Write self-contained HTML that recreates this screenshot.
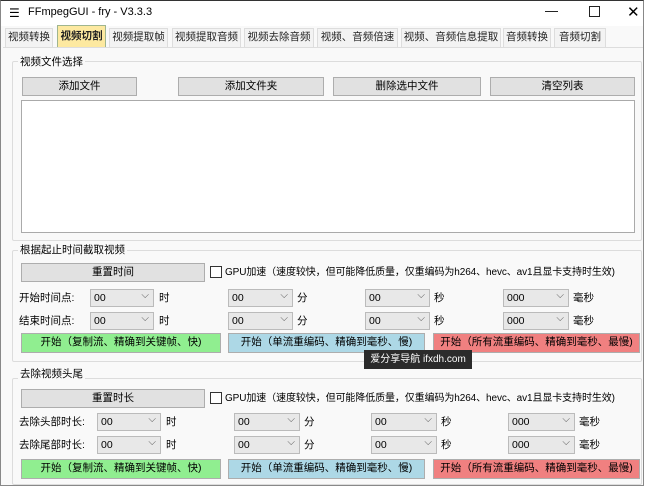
<!DOCTYPE html>
<html><head><meta charset="utf-8"><style>
*{box-sizing:border-box;margin:0;padding:0}
body{width:648px;height:492px;background:#fff;font-family:"Liberation Sans","Noto Sans CJK SC",sans-serif;font-size:11px;color:#000;position:relative;overflow:hidden}
.a{position:absolute;white-space:nowrap}
.win{position:absolute;left:0;top:0;width:644px;height:486px;border:1px solid #888;border-top:1px solid #333;background:#f9f9f9}
.title{position:absolute;left:1px;top:1px;width:642px;height:25px;background:#fff}
.tab{position:absolute;top:28px;height:19px;border:1px solid #ddd;border-bottom:none;background:#f3f3f3;font-size:10.5px;line-height:17px;text-align:center;color:#222}
.sel{top:25px;height:22px;background:#fde9a0;border-color:#9fb58f;font-weight:bold;line-height:21px}
.grp{position:absolute;border:1px solid #dcdcdc;border-radius:2px}
.btn{position:absolute;height:19px;border:1px solid #adadad;background:#e1e1e1;text-align:center;line-height:17px;font-size:10.5px}
.cb{position:absolute;height:18px;border:1px solid #bbb;background:#e8e8e8;line-height:16px;padding-left:3px;font-size:10.5px}
.cb::after{content:"⌵";position:absolute;right:4px;top:-2px;font-size:10px;color:#555}
.lb{position:absolute;font-size:10.5px;line-height:18px}
.gpu{font-size:10px;letter-spacing:-0.1px}
</style></head><body>
<div class="win"></div>
<div class="title"></div>
<div class="a" style="left:9px;top:6px;font-size:12px">☰</div>
<div class="a" style="left:28px;top:6px;font-size:11px">FFmpegGUI - fry - V3.3.3</div>
<div class="a" style="left:545px;top:3px;font-size:13px">—</div>
<div class="a" style="left:589px;top:6px;width:11px;height:11px;border:1px solid #222"></div>
<div class="a" style="left:627px;top:3px;font-size:15px">✕</div>
<div class="tab" style="left:5px;width:48px">视频转换</div>
<div class="tab sel" style="left:57px;width:49px">视频切割</div>
<div class="tab" style="left:109px;width:59px">视频提取帧</div>
<div class="tab" style="left:172px;width:69px">视频提取音频</div>
<div class="tab" style="left:244px;width:70px">视频去除音频</div>
<div class="tab" style="left:317px;width:81px">视频、音频倍速</div>
<div class="tab" style="left:401px;width:100px">视频、音频信息提取</div>
<div class="tab" style="left:503px;width:48px">音频转换</div>
<div class="tab" style="left:554px;width:52px">音频切割</div>
<div class="a" style="left:3px;top:47px;width:640px;height:1px;background:#ddd"></div>

<div class="grp" style="left:12px;top:61px;width:630px;height:180px"></div>
<div class="a" style="left:18px;top:54px;background:#f9f9f9;padding:0 2px;font-size:10.5px">视频文件选择</div>
<div class="btn" style="left:22px;top:77px;width:115px">添加文件</div>
<div class="btn" style="left:178px;top:77px;width:146px">添加文件夹</div>
<div class="btn" style="left:333px;top:77px;width:148px">删除选中文件</div>
<div class="btn" style="left:490px;top:77px;width:145px">清空列表</div>
<div class="a" style="left:21px;top:100px;width:614px;height:133px;background:#fff;border:1px solid #aaa"></div>

<div class="grp" style="left:12px;top:250px;width:630px;height:112px"></div>
<div class="a" style="left:18px;top:242px;background:#f9f9f9;padding:0 2px;font-size:10.5px">根据起止时间截取视频</div>
<div class="btn" style="left:21px;top:263px;width:184px">重置时间</div>
<div class="a" style="left:210px;top:266px;width:12px;height:12px;border:1px solid #333;background:#fff"></div>
<div class="lb gpu" style="left:225px;top:264px">GPU加速（速度较快，但可能降低质量，仅重编码为h264、hevc、av1且显卡支持时生效)</div>
<div class="lb" style="left:19px;top:289px">开始时间点:</div>
<div class="cb" style="left:90px;top:289px;width:64px">00</div><div class="lb" style="left:159px;top:289px">时</div>
<div class="cb" style="left:228px;top:289px;width:65px">00</div><div class="lb" style="left:297px;top:289px">分</div>
<div class="cb" style="left:365px;top:289px;width:65px">00</div><div class="lb" style="left:434px;top:289px">秒</div>
<div class="cb" style="left:503px;top:289px;width:66px">000</div><div class="lb" style="left:573px;top:289px">毫秒</div>
<div class="lb" style="left:19px;top:312px">结束时间点:</div>
<div class="cb" style="left:90px;top:312px;width:64px">00</div><div class="lb" style="left:159px;top:312px">时</div>
<div class="cb" style="left:228px;top:312px;width:65px">00</div><div class="lb" style="left:297px;top:312px">分</div>
<div class="cb" style="left:365px;top:312px;width:65px">00</div><div class="lb" style="left:434px;top:312px">秒</div>
<div class="cb" style="left:503px;top:312px;width:66px">000</div><div class="lb" style="left:573px;top:312px">毫秒</div>
<div class="btn" style="left:21px;top:333px;width:200px;height:20px;background:#90ee90">开始（复制流、精确到关键帧、快)</div>
<div class="btn" style="left:228px;top:333px;width:197px;height:20px;background:#add8e6">开始（单流重编码、精确到毫秒、慢)</div>
<div class="btn" style="left:433px;top:333px;width:207px;height:20px;background:#f08080">开始（所有流重编码、精确到毫秒、最慢)</div>
<div class="a" style="left:364px;top:350px;width:108px;height:19px;background:#2b2b2b;color:#fff;font-size:10px;line-height:19px;text-align:center">爱分享导航 ifxdh.com</div>

<div class="grp" style="left:12px;top:378px;width:630px;height:107px"></div>
<div class="a" style="left:18px;top:366px;background:#f9f9f9;padding:0 2px;font-size:10.5px">去除视频头尾</div>
<div class="btn" style="left:21px;top:389px;width:184px">重置时长</div>
<div class="a" style="left:210px;top:392px;width:12px;height:12px;border:1px solid #333;background:#fff"></div>
<div class="lb gpu" style="left:225px;top:390px">GPU加速（速度较快，但可能降低质量，仅重编码为h264、hevc、av1且显卡支持时生效)</div>
<div class="lb" style="left:19px;top:413px">去除头部时长:</div>
<div class="cb" style="left:97px;top:413px;width:64px">00</div><div class="lb" style="left:166px;top:413px">时</div>
<div class="cb" style="left:234px;top:413px;width:66px">00</div><div class="lb" style="left:304px;top:413px">分</div>
<div class="cb" style="left:371px;top:413px;width:66px">00</div><div class="lb" style="left:441px;top:413px">秒</div>
<div class="cb" style="left:508px;top:413px;width:67px">000</div><div class="lb" style="left:579px;top:413px">毫秒</div>
<div class="lb" style="left:19px;top:436px">去除尾部时长:</div>
<div class="cb" style="left:97px;top:436px;width:64px">00</div><div class="lb" style="left:166px;top:436px">时</div>
<div class="cb" style="left:234px;top:436px;width:66px">00</div><div class="lb" style="left:304px;top:436px">分</div>
<div class="cb" style="left:371px;top:436px;width:66px">00</div><div class="lb" style="left:441px;top:436px">秒</div>
<div class="cb" style="left:508px;top:436px;width:67px">000</div><div class="lb" style="left:579px;top:436px">毫秒</div>
<div class="btn" style="left:21px;top:459px;width:200px;height:20px;background:#90ee90">开始（复制流、精确到关键帧、快)</div>
<div class="btn" style="left:228px;top:459px;width:197px;height:20px;background:#add8e6">开始（单流重编码、精确到毫秒、慢)</div>
<div class="btn" style="left:433px;top:459px;width:207px;height:20px;background:#f08080">开始（所有流重编码、精确到毫秒、最慢)</div>
</body></html>
